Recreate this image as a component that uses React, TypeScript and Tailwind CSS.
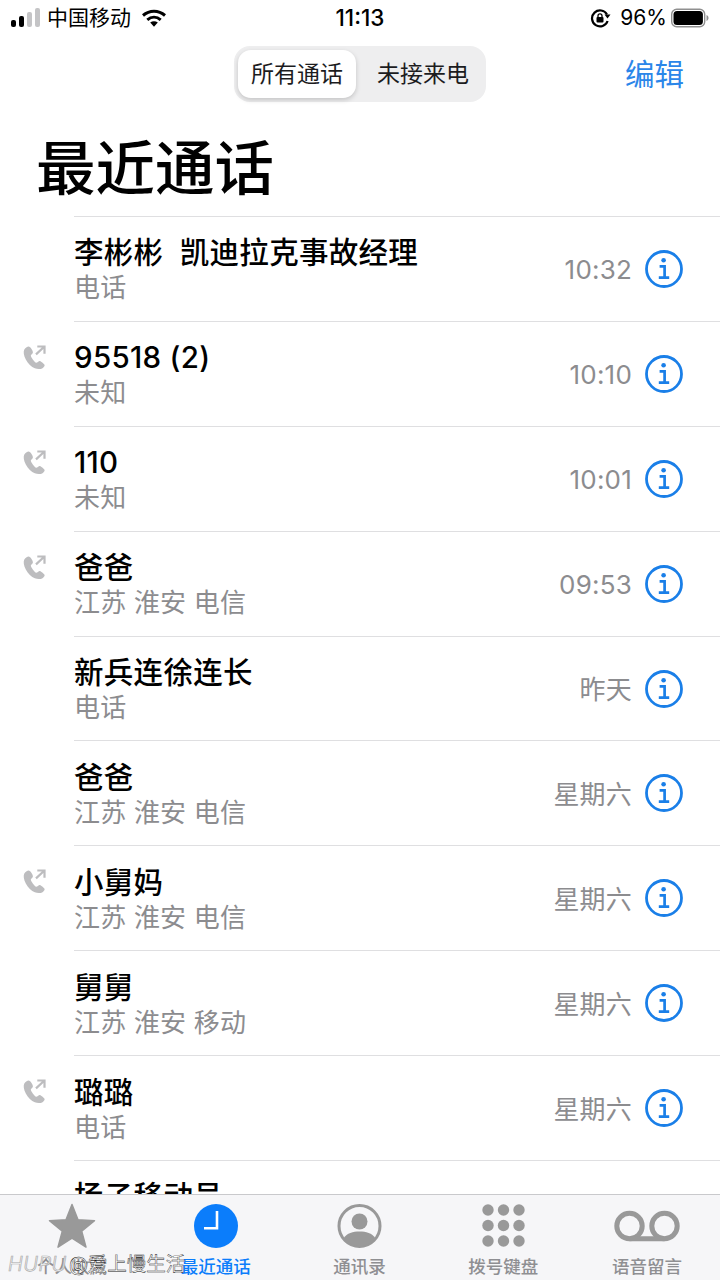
import React from 'react'

const CJK = 'font-["Inter","Noto_Sans_CJK_SC",sans-serif]'

interface Call {
  name: string
  sub: string
  time: string
  outgoing?: boolean
}

const calls: Call[] = [
  { name: '李彬彬  凯迪拉克事故经理', sub: '电话', time: '10:32' },
  { name: '95518 (2)', sub: '未知', time: '10:10', outgoing: true },
  { name: '110', sub: '未知', time: '10:01', outgoing: true },
  { name: '爸爸', sub: '江苏 淮安 电信', time: '09:53', outgoing: true },
  { name: '新兵连徐连长', sub: '电话', time: '昨天' },
  { name: '爸爸', sub: '江苏 淮安 电信', time: '星期六' },
  { name: '小舅妈', sub: '江苏 淮安 电信', time: '星期六', outgoing: true },
  { name: '舅舅', sub: '江苏 淮安 移动', time: '星期六' },
  { name: '璐璐', sub: '电话', time: '星期六', outgoing: true },
  { name: '扬子移动号', sub: '电话', time: '星期六' },
]

const InfoIcon = () => (
  <svg width="38" height="38" viewBox="0 0 38 38" fill="none" aria-hidden="true">
    <circle cx="19" cy="19" r="17.5" stroke="#1a7fe8" strokeWidth="2.8" />
    <circle cx="18.6" cy="10.2" r="2.3" fill="#1a7fe8" />
    <path d="M14.6 16.3h5v11.2M13.8 27.6h10.4" stroke="#1a7fe8" strokeWidth="2.7" />
  </svg>
)

const OutgoingIcon = () => (
  <svg width="24" height="26" viewBox="0 0 24 26" fill="none" aria-hidden="true">
    <path
      d="M5.600 1.600c-1.200 0-3.600 1.600-4.400 3.200-.9 2-.6 5.600 1.600 9.600 2.300 4.200 5.600 7.500 9 8.900 2.800 1.100 5.700.9 7.300.1 1.400-.8 2.800-2.400 2.500-3.500-.3-.9-3.400-3.700-4.700-4-1.200-.2-2.700 1.900-3.700 1.800-1.500-.2-5.200-5.400-5.400-7-.1-1.100 2-2 2.100-3.300.1-1.300-2.300-5.800-4.300-5.800z"
      fill="#bdbdbf"
    />
    <path d="M13 9.400 21.200 1.800M14.300 1.500h7.200v7.200" stroke="#bdbdbf" strokeWidth="2.2" />
  </svg>
)

const CallRow = ({ call }: { call: Call }) => (
  <li className="flex h-[104.9px] shrink-0">
    <div className="w-[74px] shrink-0 pl-[23px] pt-[24px]">{call.outgoing ? <OutgoingIcon /> : null}</div>
    <div className="flex min-w-0 flex-1 items-center border-t border-[#dfdfe1] pr-[37px]">
      <div className="min-w-0 flex-1 pt-[3px]">
        <div className="whitespace-pre text-[29.5px] leading-[36px] font-medium tracking-[0.3px] text-black">{call.name}</div>
        <div className="text-[26px] leading-[36px] tracking-[0.2px] text-[#8c8c8f]">{call.sub}</div>
      </div>
      <span className="mr-[13px] pt-[2px] text-[26px] tracking-[0.2px] text-[#8c8c8f]">{call.time}</span>
      <InfoIcon />
    </div>
  </li>
)

const StatusBar = () => (
  <div className="flex h-[36px] shrink-0 items-center justify-between pl-[11px] pr-[11px] text-[20px] text-black">
    <div className="flex w-[240px] items-center">
      <svg width="30" height="20" viewBox="0 0 30 20" aria-hidden="true">
        <rect x="0" y="12" width="5" height="7" rx="2" fill="#000" />
        <rect x="8" y="8" width="5" height="11" rx="2" fill="#000" />
        <rect x="16" y="4" width="5" height="15" rx="2" fill="#c4c4c6" />
        <rect x="24" y="0" width="5" height="19" rx="2" fill="#c4c4c6" />
      </svg>
      <span className="ml-[6px] text-[21px]">中国移动</span>
      <svg className="ml-[10px]" width="26" height="20" viewBox="0 0 26 20" fill="none" aria-hidden="true">
        <path d="M2 7.500C8.500 1.800 17.500 1.800 24 7.500" stroke="#000" strokeWidth="3" />
        <path d="M6.300 11.800c4-3.400 9.400-3.400 13.400 0" stroke="#000" strokeWidth="3" />
        <path d="M9.200 14.500c2.300-1.700 5.300-1.700 7.600 0L13 18.800z" fill="#000" />
      </svg>
    </div>
    <span className="text-[22.5px] font-medium">11:13</span>
    <div className="flex w-[240px] items-center justify-end">
      <svg width="21" height="20" viewBox="0 0 21 20" fill="none" aria-hidden="true">
        <path d="M17 6.500A8 8 0 1 0 17.600 13" stroke="#000" strokeWidth="2.200" />
        <path d="M14.500 6.500h6L17.500 10.500z" fill="#000" />
        <rect x="6.500" y="9" width="7" height="5.500" rx="1" fill="#000" />
        <path d="M8 9.500V7.800a2 2 0 0 1 4 0V9.500" stroke="#000" strokeWidth="1.300" />
      </svg>
      <span className="ml-[9px] text-[21px]">96%</span>
      <svg className="ml-[4px]" width="38" height="20" viewBox="0 0 38 20" fill="none" aria-hidden="true">
        <rect x="0.700" y="1.200" width="33" height="17.600" rx="5" stroke="#8f8f8f" strokeWidth="1.400" />
        <rect x="2.500" y="3" width="29.400" height="14" rx="3.500" fill="#000" />
        <path d="M35.500 7v6c1.200-.4 2-1.600 2-3s-.8-2.600-2-3z" fill="#8f8f8f" />
      </svg>
    </div>
  </div>
)

const StarIcon = () => (
  <svg width="48" height="46" viewBox="0 0 48 46" aria-hidden="true">
    <path
      d="M24 1.500 30 16.800l16.500.9-12.800 10.400 4.300 16-14-8.900-14 8.900 4.300-16L1.500 17.700 18 16.800z"
      fill="#999"
      stroke="#999"
      strokeWidth="1.500"
      strokeLinejoin="round"
    />
  </svg>
)

const ClockIcon = () => (
  <svg width="44" height="44" viewBox="0 0 44 44" fill="none" aria-hidden="true">
    <circle cx="22" cy="22" r="22" fill="#0b7dfb" />
    <path d="M23 7v17.200H10" stroke="#fff" strokeWidth="2.600" />
  </svg>
)

const ContactIcon = () => (
  <svg width="45" height="44" viewBox="0 0 45 44" fill="none" aria-hidden="true">
    <circle cx="22.500" cy="22" r="20.500" stroke="#999" strokeWidth="3" />
    <circle cx="22.500" cy="17.500" r="8" fill="#999" />
    <path d="M6.500 34.500C10 29 16 27.500 22.500 27.500S35 29 38.500 34.500C34.500 39.500 29 42 22.500 42S10.500 39.500 6.500 34.500z" fill="#999" />
  </svg>
)

const KeypadIcon = () => (
  <svg width="43" height="44" viewBox="0 0 43 44" aria-hidden="true">
    {[6, 21.5, 37].flatMap((cy) =>
      [6, 21.5, 37].map((cx) => <circle key={`${cx}-${cy}`} cx={cx} cy={cy} r="5.700" fill="#999" />),
    )}
  </svg>
)

const VoicemailIcon = () => (
  <svg width="66" height="44" viewBox="0 0 66 44" fill="none" aria-hidden="true">
    <circle cx="15.500" cy="22" r="12.700" stroke="#999" strokeWidth="5" />
    <circle cx="50.500" cy="22" r="12.700" stroke="#999" strokeWidth="5" />
    <path d="M15.500 34.700h35" stroke="#999" strokeWidth="5" />
  </svg>
)

const tabs = [
  { label: '个人收藏', icon: <StarIcon /> },
  { label: '最近通话', icon: <ClockIcon />, active: true },
  { label: '通讯录', icon: <ContactIcon /> },
  { label: '拨号键盘', icon: <KeypadIcon /> },
  { label: '语音留言', icon: <VoicemailIcon /> },
]

export default function App() {
  return (
    <div className={`relative flex h-[1280px] w-[720px] flex-col overflow-hidden bg-white ${CJK}`}>
      <StatusBar />
      <div className="flex h-[66px] shrink-0 items-start pt-[10px]">
        <div className="ml-[234px] flex h-[56px] w-[252px] items-center rounded-[16px] bg-[#eeeeef] p-[4px] text-[23px] text-[#1c1c1e]">
          <div className="flex h-[48px] w-[118px] items-center justify-center rounded-[13px] bg-white shadow-[0_2px_5px_rgba(0,0,0,0.18)]">所有通话</div>
          <div className="flex h-[48px] flex-1 items-center justify-center pl-[8px]">未接来电</div>
        </div>
        <span className="ml-[139px] mt-[8px] text-[29.5px] leading-[40px] text-[#2b86e9]">编辑</span>
      </div>
      <h1 className="h-[114px] shrink-0 pl-[36px] pt-[26px] text-[59.5px] leading-[80px] font-medium text-black">最近通话</h1>
      <ul className="min-h-0 flex-1 overflow-hidden">
        {calls.map((call, i) => (
          <CallRow key={i} call={call} />
        ))}
      </ul>
      <nav className="grid h-[86px] shrink-0 grid-cols-5 border-t border-[#c9c9cc] bg-[#f6f6f8] pr-[1px]">
        {tabs.map((tab) => (
          <div key={tab.label} className="flex flex-col items-center">
            <div className="flex h-[56px] items-center pt-[5px]">{tab.icon}</div>
            <span className={`mt-[4px] text-[17.5px] leading-[24px] font-medium ${tab.active ? 'text-[#0b7dfb]' : 'text-[#8f8f92]'}`}>{tab.label}</span>
          </div>
        ))}
      </nav>
      {/* watermark sits over the tab bar */}
      <div className="absolute left-[8px] top-[1251px] flex items-center text-white">
        <span className="w-[61px] text-[20px] leading-[26px] font-light italic tracking-[0.5px] [-webkit-text-stroke:0.7px_#a8a8a8]">HUPU</span>
        <span className="text-[19.5px] leading-[26px] [-webkit-text-stroke:0.4px_#111]">@爱上慢生活</span>
      </div>
    </div>
  )
}
